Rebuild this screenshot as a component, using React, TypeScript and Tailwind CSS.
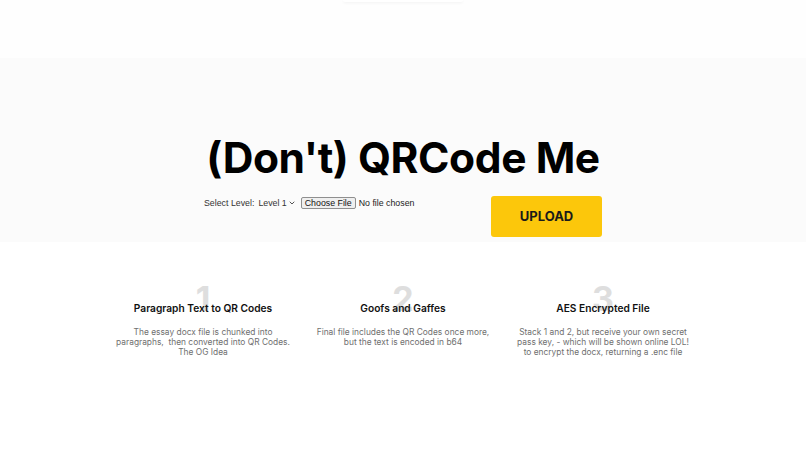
import { ChevronDown } from "lucide-react";

const features = [
  {
    n: "1",
    title: "Paragraph Text to QR Codes",
    body: ["The essay docx file is chunked into", "paragraphs,  then converted into QR Codes.", "The OG Idea"],
  },
  {
    n: "2",
    title: "Goofs and Gaffes",
    body: ["Final file includes the QR Codes once more,", "but the text is encoded in b64"],
  },
  {
    n: "3",
    title: "AES Encrypted File",
    body: [
      "Stack 1 and 2, but receive your own secret",
      "pass key, - which will be shown online LOL!",
      "to encrypt the docx, returning a .enc file",
    ],
  },
];

export default function App() {
  return (
    <div className="min-h-[453px] bg-white font-['Inter','Liberation_Sans',sans-serif] text-[#111]">
      <header className="flex h-[58px] justify-center bg-[#fefefe]">
        <div className="h-[2px] w-[120px] rounded-b-md bg-white shadow-[0_1px_3px_rgba(0,0,0,0.06)]" />
      </header>

      <section className="flex h-[184px] flex-col items-center bg-[#fbfbfb] pt-[76px]">
        <h1 className="text-[42.5px] leading-[47px] font-bold tracking-[-0.01em] text-black">
          (Don't) QRCode Me
        </h1>
        <div className="mt-[15px] flex w-[398px] items-start justify-between">
          <div className="mt-[1px] flex items-center font-['Liberation_Sans',Arial,sans-serif] text-[8.8px] leading-[12px] text-[#333]">
            <span>Select Level:</span>
            <span className="ml-[4px] flex items-center">
              Level 1
              <ChevronDown size={8} strokeWidth={2.5} className="ml-[1px]" />
            </span>
            <span className="ml-[5px] rounded-[2px] border border-[#8f8f8f] bg-[#efefef] px-[3px] leading-[10px] text-[#111]">
              Choose File
            </span>
            <span className="ml-[3px] text-[#222]">No file chosen</span>
          </div>
          <button
            type="button"
            className="flex h-[41px] w-[111px] items-center justify-center rounded-[3px] bg-[#fcc70b] text-[13px] font-bold text-[#1a1a1a]"
          >
            UPLOAD
          </button>
        </div>
      </section>

      <section className="mx-auto mt-[40px] grid w-[600px] grid-cols-3">
        {features.map((f) => (
          <div key={f.n} className="flex flex-col items-center text-center">
            <span aria-hidden="true" className="text-[34px] leading-none font-bold text-[#dedede]">
              {f.n}
            </span>
            <h3 className="relative -mt-[15px] text-[10.2px] leading-[14px] font-semibold text-[#111]">
              {f.title}
            </h3>
            <p className="mt-[12px] text-[8.4px] leading-[10px] text-[#6f6f6f]">
              {f.body.map((line) => (
                <span key={line} className="block whitespace-pre">
                  {line}
                </span>
              ))}
            </p>
          </div>
        ))}
      </section>
    </div>
  );
}
